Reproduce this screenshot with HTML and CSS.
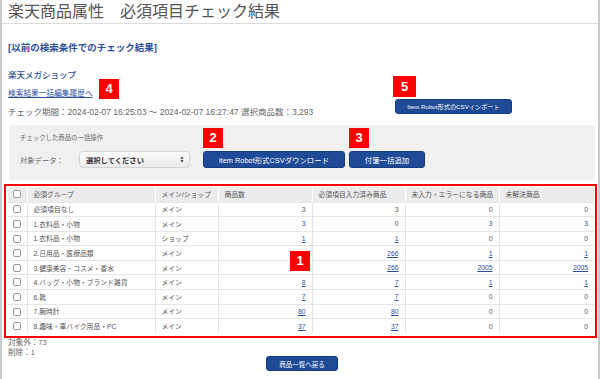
FILE: index.html
```html
<!DOCTYPE html>
<html>
<head>
  <meta charset="UTF-8">
  <title>楽天商品属性 必須項目チェック結果</title>
  <link rel="stylesheet" href="styles.css">
</head>
<body>
  <div class="page">
    <h1 class="page-title">楽天商品属性　必須項目チェック結果</h1>

    <div class="content">
      <a href="#" class="prev-link">[以前の検索条件でのチェック結果]</a>

      <div class="shop-head">
        <div class="shop-info">
          <div class="shop-name">楽天メガショップ</div>
          <a href="#" class="history-link">検索結果一括編集履歴へ</a>
          <div class="period">チェック期間：2024-02-07 16:25:03 〜 2024-02-07 16:27:47 選択商品数：3,293</div>
        </div>
        <button class="btn import-btn">Item Robot形式のCSVインポート</button>
      </div>

      <div class="bulk-panel">
        <div class="bulk-title">チェックした商品の一括操作</div>
        <div class="bulk-controls">
          <span class="bulk-label">対象データ：</span>
          <div class="fake-select">
            <span>選択してください</span>
            <svg class="select-arrows" viewBox="0 0 6 10">
              <path d="M3 0.5 L5.5 3.8 H0.5 Z M3 9.5 L5.5 6.2 H0.5 Z" fill="#333"></path>
            </svg>
          </div>
          <button class="btn download-btn">item Robot形式CSVダウンロード</button>
          <button class="btn memo-btn">付箋一括追加</button>
        </div>
      </div>

      <div class="table-frame">
        <table class="result-table">
          <colgroup>
            <col style="width: 19px">
            <col style="width: 128px">
            <col style="width: 63px">
            <col style="width: 94px">
            <col style="width: 93px">
            <col style="width: 94px">
            <col>
          </colgroup>
          <thead>
            <tr>
              <th class="cb-cell"><span class="checkbox"></span></th>
              <th>必須グループ</th>
              <th>メイン/ショップ</th>
              <th>商品数</th>
              <th>必須項目入力済み商品</th>
              <th>未入力・エラーになる商品</th>
              <th>未解決商品</th>
            </tr>
          </thead>
          <tbody>
            <tr>
              <td class="cb-cell"><span class="checkbox"></span></td>
              <td>必須項目なし</td>
              <td>メイン</td>
              <td class="num">3</td>
              <td class="num">3</td>
              <td class="num">0</td>
              <td class="num">0</td>
            </tr>
            <tr>
              <td class="cb-cell"><span class="checkbox"></span></td>
              <td>1.衣料品・小物</td>
              <td>メイン</td>
              <td class="num"><a href="#" class="plain">3</a></td>
              <td class="num">0</td>
              <td class="num"><a href="#" class="plain">3</a></td>
              <td class="num"><a href="#" class="plain">3</a></td>
            </tr>
            <tr>
              <td class="cb-cell"><span class="checkbox"></span></td>
              <td>1.衣料品・小物</td>
              <td>ショップ</td>
              <td class="num"><a href="#">1</a></td>
              <td class="num"><a href="#">1</a></td>
              <td class="num">0</td>
              <td class="num">0</td>
            </tr>
            <tr>
              <td class="cb-cell"><span class="checkbox"></span></td>
              <td>2.日用品・医療品類</td>
              <td>メイン</td>
              <td class="num"></td>
              <td class="num"><a href="#">266</a></td>
              <td class="num"><a href="#">1</a></td>
              <td class="num"><a href="#">1</a></td>
            </tr>
            <tr>
              <td class="cb-cell"><span class="checkbox"></span></td>
              <td>3.健康美容・コスメ・香水</td>
              <td>メイン</td>
              <td class="num"></td>
              <td class="num"><a href="#">266</a></td>
              <td class="num"><a href="#">2005</a></td>
              <td class="num"><a href="#">2005</a></td>
            </tr>
            <tr>
              <td class="cb-cell"><span class="checkbox"></span></td>
              <td>4.バッグ・小物・ブランド雑貨</td>
              <td>メイン</td>
              <td class="num"><a href="#">8</a></td>
              <td class="num"><a href="#">7</a></td>
              <td class="num"><a href="#">1</a></td>
              <td class="num"><a href="#">1</a></td>
            </tr>
            <tr>
              <td class="cb-cell"><span class="checkbox"></span></td>
              <td>6.靴</td>
              <td>メイン</td>
              <td class="num"><a href="#">7</a></td>
              <td class="num"><a href="#">7</a></td>
              <td class="num">0</td>
              <td class="num">0</td>
            </tr>
            <tr>
              <td class="cb-cell"><span class="checkbox"></span></td>
              <td>7.腕時計</td>
              <td>メイン</td>
              <td class="num"><a href="#">80</a></td>
              <td class="num"><a href="#">80</a></td>
              <td class="num">0</td>
              <td class="num">0</td>
            </tr>
            <tr>
              <td class="cb-cell"><span class="checkbox"></span></td>
              <td>8.趣味・車バイク用品・PC</td>
              <td>メイン</td>
              <td class="num"><a href="#">37</a></td>
              <td class="num"><a href="#">37</a></td>
              <td class="num">0</td>
              <td class="num">0</td>
            </tr>
          </tbody>
        </table>
      </div>

      <div class="notes">
        <div>対象外：73</div>
        <div>削除：1</div>
      </div>

      <div class="back-row">
        <button class="btn back-btn">商品一覧へ戻る</button>
      </div>
    </div>

    <span class="marker marker-1">1</span>
    <span class="marker marker-2">2</span>
    <span class="marker marker-3">3</span>
    <span class="marker marker-4">4</span>
    <span class="marker marker-5">5</span>
  </div>
</body>
</html>
```

FILE: styles.css
```css
* {
  margin: 0;
  padding: 0;
  box-sizing: border-box;
}

body {
  font-family: "Liberation Sans", "Noto Sans CJK JP", sans-serif;
  background: #fff;
  color: #555;
}

.page {
  position: relative;
  width: 600px;
  height: 379px;
  border-left: 2px solid #cacaca;
  border-right: 2px solid #cacaca;
  overflow: hidden;
}

.page-title {
  font-size: 16px;
  font-weight: normal;
  color: #555;
  line-height: 18px;
  padding: 3px 6px 2px;
  border-bottom: 1px solid #dcdcdc;
}

.content {
  padding: 0 2px 0 6px;
}

a {
  color: #2d4f9e;
}

.prev-link {
  display: block;
  margin-top: 18px;
  font-size: 9.5px;
  line-height: 12px;
  font-weight: bold;
  text-decoration: none;
}

.shop-head {
  display: flex;
  align-items: flex-start;
  margin-top: 15px;
}

.shop-info {
  width: 387px;
}

.shop-name {
  font-size: 8.5px;
  line-height: 12px;
  font-weight: 500;
  color: #2d4f9e;
}

.history-link {
  display: block;
  margin-top: 7px;
  font-size: 7.7px;
  line-height: 12px;
}

.period {
  margin-top: 6px;
  font-size: 8.5px;
  line-height: 12px;
  color: #666;
  white-space: nowrap;
}

.btn {
  font-family: "Liberation Sans", "Noto Sans CJK JP", sans-serif;
  background: #1f4a96;
  color: #fff;
  border: 1px solid #173c7e;
  border-radius: 3px;
  font-size: 7px;
  cursor: pointer;
}

.import-btn {
  margin-top: 30px;
  width: 117px;
  height: 15px;
  font-size: 6.2px;
}

.bulk-panel {
  margin: 7px 1px 0;
  background: #f0f0f0;
  border-radius: 4px;
  padding: 9px 11px 12px;
}

.bulk-title {
  font-size: 6.4px;
  line-height: 8px;
  color: #666;
}

.bulk-controls {
  display: flex;
  align-items: center;
  margin-top: 9px;
  height: 17px;
}

.bulk-label {
  width: 59px;
  font-size: 7.3px;
  color: #666;
}

.fake-select {
  width: 111px;
  height: 17px;
  display: flex;
  align-items: center;
  justify-content: space-between;
  padding: 0 5px 0 6px;
  background: linear-gradient(#fdfdfd, #e9e9e9);
  border: 1px solid #d4d4d4;
  border-radius: 4px;
  font-size: 7.3px;
  font-weight: bold;
  color: #333;
}

.select-arrows {
  width: 4px;
  height: 7px;
}

.download-btn {
  margin-left: 13px;
  width: 142px;
  height: 17px;
  font-size: 7.4px;
}

.memo-btn {
  margin-left: 4px;
  width: 76px;
  height: 17px;
  font-size: 7.4px;
}

.table-frame {
  margin: 4px -1px 0 -4px;
  border: 2px solid #f00;
  padding: 1px 1px 3px 2px;
}

.result-table {
  width: 100%;
  table-layout: fixed;
  border-collapse: collapse;
  font-size: 6.8px;
  color: #555;
}

.result-table th {
  background: #ececec;
  font-weight: normal;
  text-align: left;
  height: 15px;
  padding: 0 6px;
  border-right: 1px solid #fff;
  white-space: nowrap;
}

.result-table td {
  height: 14.6px;
  padding: 0 6px;
  border-top: 1px solid #e6e6e6;
  border-right: 1px solid #e6e6e6;
  white-space: nowrap;
}

.result-table td:last-child,
.result-table th:last-child {
  border-right: none;
}

.result-table .cb-cell {
  padding: 0;
  text-align: center;
}

.result-table .num {
  text-align: right;
}

.result-table a.plain {
  text-decoration: none;
}

.checkbox {
  display: inline-block;
  width: 8px;
  height: 8px;
  border: 1px solid #999;
  border-radius: 2px;
  background: #fff;
  vertical-align: middle;
}

.notes {
  font-size: 7.6px;
  line-height: 10px;
  color: #666;
}

.back-row {
  display: flex;
  justify-content: center;
  margin-top: -2px;
}

.back-btn {
  width: 72px;
  height: 15px;
  font-size: 6.5px;
}

.marker {
  position: absolute;
  width: 20px;
  height: 20px;
  background: #f00;
  color: #fff;
  font-size: 13px;
  font-weight: bold;
  line-height: 20px;
  text-align: center;
}

.marker-1 {
  left: 288px;
  top: 251px;
}

.marker-2 {
  left: 201px;
  top: 128px;
}

.marker-3 {
  left: 347px;
  top: 128px;
}

.marker-4 {
  left: 97px;
  top: 79px;
}

.marker-5 {
  left: 391px;
  top: 76px;
  width: 23px;
  height: 21px;
  line-height: 21px;
}
```
